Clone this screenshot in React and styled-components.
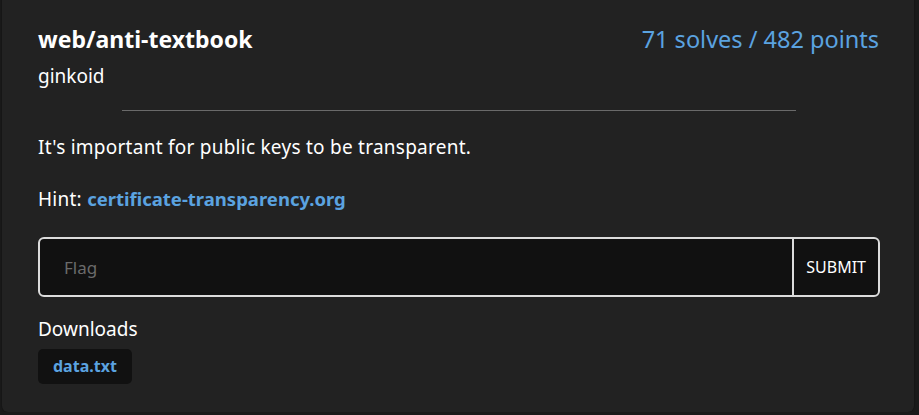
import React from "react";
import styled, { createGlobalStyle } from "styled-components";

const Global = createGlobalStyle`
  html, body { margin: 0; padding: 0; background: #1a1a1a; }
  body { font-family: "Noto Sans", "Open Sans", sans-serif; color: #fff; }
  * { box-sizing: border-box; }
`;

const Card = styled.div`
  margin: -8px 0 0 2px;
  width: 912px;
  height: 420px;
  background: #222222;
  border-radius: 0 0 6px 6px;
  padding: 33px 34px 0 36px;
  box-shadow: 0 0 2px rgba(0, 0, 0, 0.5);
`;

const Header = styled.div`
  display: flex;
  justify-content: space-between;
  align-items: flex-start;
`;

const Title = styled.h1`
  margin: 0;
  font-size: 23px;
  font-weight: 700;
  line-height: 28px;
  color: #fff;
`;

const Stats = styled.div`
  font-size: 23.5px;
  line-height: 28px;
  color: #5ba3e0;
  margin-right: 1px;
`;

const Author = styled.div`
  margin-top: 11px;
  font-size: 19px;
  line-height: 24px;
`;

const Divider = styled.hr`
  width: 80%;
  margin: 22px auto 23px;
  border: 0;
  border-top: 1px solid #6a6a6a;
`;

const Para = styled.p`
  margin: 0 0 24px;
  font-size: 19px;
  line-height: 27px;
  letter-spacing: 0.25px;
`;

const Link = styled.a`
  color: #5ba3e0;
  font-weight: 700;
  font-size: 18.5px;
  letter-spacing: 0;
  text-decoration: none;
`;

const FlagForm = styled.form`
  display: flex;
  height: 60px;
  border: 2px solid #dcdcdc;
  border-radius: 6px;
  background: #111111;
  overflow: hidden;
  margin-top: 1px;
`;

const FlagInput = styled.input`
  flex: 1;
  background: transparent;
  border: 0;
  outline: none;
  padding: 0 24px;
  font-family: inherit;
  font-size: 17px;
  color: #fff;
  &::placeholder {
    color: #6b6b6b;
  }
`;

const Submit = styled.button`
  border: 0;
  border-left: 2px solid #dcdcdc;
  background: transparent;
  color: #fff;
  font-family: inherit;
  font-size: 16px;
  padding: 0 12px;
  text-transform: uppercase;
`;

const DownloadsLabel = styled.div`
  margin-top: 19px;
  font-size: 19px;
  line-height: 27px;
`;

const FileButton = styled.a`
  display: inline-block;
  margin-top: 6px;
  padding: 6px 15px;
  background: #111111;
  border-radius: 5px;
  color: #5ba3e0;
  font-weight: 700;
  font-size: 16px;
  line-height: 23px;
  text-decoration: none;
`;

export default function App() {
  return (
    <>
      <Global />
      <Card>
        <Header>
          <Title>web/anti-textbook</Title>
          <Stats>71 solves / 482 points</Stats>
        </Header>
        <Author>ginkoid</Author>
        <Divider />
        <Para>It's important for public keys to be transparent.</Para>
        <Para>
          Hint: <Link href="#">certificate-transparency.org</Link>
        </Para>
        <FlagForm onSubmit={(e) => e.preventDefault()}>
          <FlagInput placeholder="Flag" />
          <Submit type="submit">Submit</Submit>
        </FlagForm>
        <DownloadsLabel>Downloads</DownloadsLabel>
        <FileButton href="#">data.txt</FileButton>
      </Card>
    </>
  );
}
